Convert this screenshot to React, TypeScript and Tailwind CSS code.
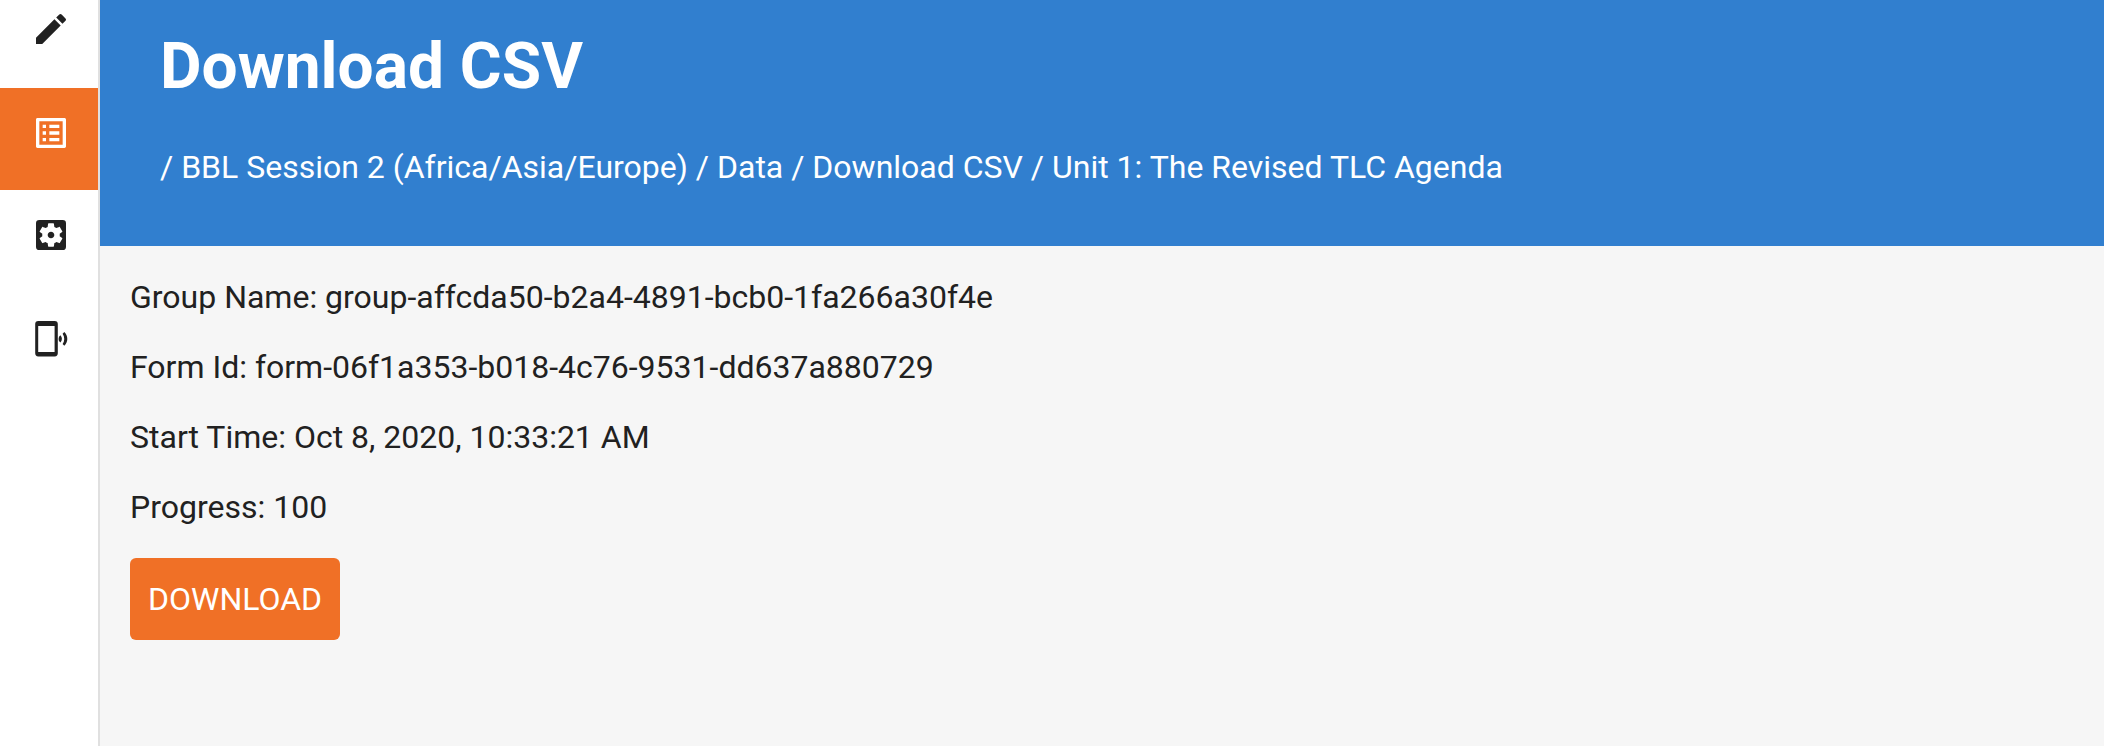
import React from 'react';
import { MdModeEdit, MdListAlt, MdSettingsApplications } from 'react-icons/md';

const rows = [
  'Group Name: group-affcda50-b2a4-4891-bcb0-1fa266a30f4e',
  'Form Id: form-06f1a353-b018-4c76-9531-dd637a880729',
  'Start Time: Oct 8, 2020, 10:33:21 AM',
  'Progress: 100',
];

const link = 'flex h-[102px] pl-[31px] pt-[25px]';

function PhoneSignalIcon() {
  return (
    <svg width="40" height="40" viewBox="0 0 40 40" fill="none">
      <path
        fill="currentColor"
        fillRule="evenodd"
        d="M7.3 4h16.4a3.1 3.1 0 0 1 3.1 3.1v29.2a3.1 3.1 0 0 1-3.1 3.1H7.3a3.1 3.1 0 0 1-3.1-3.1V7.1A3.1 3.1 0 0 1 7.3 4zM7.2 9v26.1h16.4V9z"
      />
      <path
        fill="currentColor"
        d="M28.2 19.5l1.2-1.2c2 2 2 5.2 0 7.2l-1.2-1.2c-.8-1.4-.8-3.4 0-4.8zM31.6 16.7l1.7-1.7c4 3.8 4 10 0 13.8l-1.7-1.7c2.2-3 2.2-7.4 0-10.4z"
      />
    </svg>
  );
}

export default function App() {
  return (
    <div className="flex min-h-screen bg-[#f6f6f6] font-['Roboto',sans-serif] text-[#212121]">
      <nav className="w-[100px] shrink-0 border-r-2 border-[#e0e0e0] bg-white">
        <a href="#author" aria-label="Author" className="flex h-[88px] pl-[31px] pt-[9px]"><MdModeEdit size={40} /></a>
        <a href="#data" aria-label="Data" className={link + ' bg-[#f07026] text-white'}><MdListAlt size={40} /></a>
        <a href="#configure" aria-label="Configure" className={link}><MdSettingsApplications size={40} /></a>
        <a href="#deploy" aria-label="Deploy" className={link}><PhoneSignalIcon /></a>
      </nav>
      <div className="grow">
        <header className="h-[246px] bg-[#317fcf] px-[60px] pt-[33px] text-white">
          <h1 className="text-[64px] leading-[68px] font-bold">Download CSV</h1>
          <p className="mt-[45px] text-[32px] leading-[42px]">
            / BBL Session 2 (Africa/Asia/Europe) / Data / Download CSV / Unit 1: The Revised TLC Agenda
          </p>
        </header>
        <main className="px-[30px] pt-8 text-[32px] leading-[38px]">
          {rows.map((r) => <p key={r} className="mb-8">{r}</p>)}
          <button className="h-[82px] rounded-md bg-[#f07026] px-[18px] text-white">DOWNLOAD</button>
        </main>
      </div>
    </div>
  );
}
